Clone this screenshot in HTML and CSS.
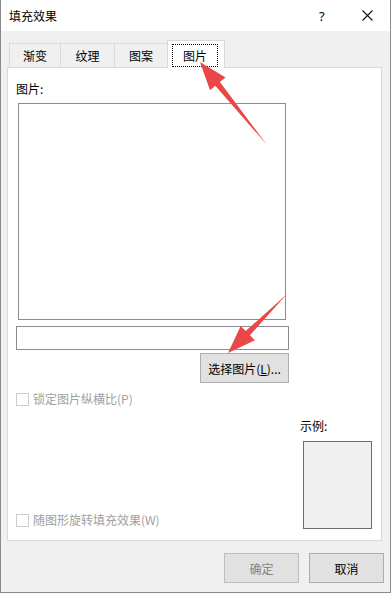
FILE: index.html
```html
<!DOCTYPE html>
<html lang="zh-CN">
<head>
    <meta charset="UTF-8">
    <title>填充效果</title>
    <link rel="stylesheet" href="styles.css">
</head>
<body>

<div class="dialog">
    <div class="titlebar">
        <span class="title">填充效果</span>
        <span class="help">?</span>
        <svg class="close" width="11" height="11" viewBox="0 0 11 11">
            <path d="M0.5 0.5 L10.5 10.5 M10.5 0.5 L0.5 10.5" stroke="#111" stroke-width="1.1" fill="none"/>
        </svg>
    </div>

    <div class="tabs">
        <div class="tab tab-1">渐变</div>
        <div class="tab tab-2">纹理</div>
        <div class="tab tab-3">图案</div>
        <div class="tab active"><span class="focus">图片</span></div>
    </div>

    <div class="panel">
        <div class="label">图片:</div>
        <div class="picture-box"></div>
        <div class="path-input"></div>
        <div class="btn-row">
            <button class="btn select-btn">选择图片(<u>L</u>)...</button>
        </div>
        <div class="check-row">
            <span class="checkbox"></span>
            <span class="check-text">锁定图片纵横比(P)</span>
        </div>
        <div class="lower">
            <div class="check-row rotate-row">
                <span class="checkbox"></span>
                <span class="check-text">随图形旋转填充效果(W)</span>
            </div>
            <div class="sample-col">
                <div class="label">示例:</div>
                <div class="sample-box"></div>
            </div>
        </div>
    </div>

    <div class="footer">
        <button class="btn ok-btn">确定</button>
        <button class="btn">取消</button>
    </div>

    <!-- red annotation arrows -->
    <svg class="arrows" width="391" height="593" viewBox="0 0 391 593">
        <polygon points="267,145 219.9,81.9 225.5,77.4 200,62 210,90.2 215.3,85.7" fill="#e84848"/>
        <polygon points="287,294 249.9,335.3 254.9,340.3 228,353 240.7,326.1 245.7,331.1" fill="#e84848"/>
    </svg>
</div>

</body>
</html>
```

FILE: styles.css
```css
body {
    margin: 0;
    padding: 0;
    background-color: #f0f0f0;
    font-family: "Noto Sans CJK SC", "Noto Sans", sans-serif;
    font-size: 12px;
    color: #000;
}
.dialog {
    position: relative;
    width: 391px;
    height: 593px;
    box-sizing: border-box;
    border: 1px solid #8a8a8a;
    border-top: none;
    background-color: #f0f0f0;
    display: flex;
    flex-direction: column;
}
/* Title bar */
.titlebar {
    height: 31px;
    background-color: #fff;
    display: flex;
    align-items: center;
    padding-left: 8px;
    flex-shrink: 0;
}
.title {
    font-size: 12px;
    line-height: 16px;
    flex: 1;
}
.help {
    font-family: "Noto Sans", sans-serif;
    font-size: 13px;
    width: 12px;
    margin-right: 31px;
}
.close {
    margin-right: 17px;
}
/* Tabs */
.tabs {
    display: flex;
    align-items: flex-end;
    margin-top: 9px;
    padding-left: 8px;
}
.tab {
    height: 24px;
    box-sizing: border-box;
    border: 1px solid #d9d9d9;
    border-bottom: none;
    display: flex;
    align-items: center;
    justify-content: center;
    line-height: 16px;
    margin-left: -1px;
}
.tab-1 {
    width: 52px;
    margin-left: 0;
}
.tab-2 {
    width: 55px;
}
.tab-3 {
    width: 54px;
}
.tab.active {
    position: relative;
    z-index: 1;
    width: 58px;
    height: 28px;
    margin-bottom: -1px;
    background-color: #fff;
    justify-content: flex-start;
    padding-left: 4px;
}
.focus {
    border: 1px dotted #000;
    padding: 0 10px;
    line-height: 21px;
    margin-top: 1px;
}
/* Panel */
.panel {
    margin-left: 6px;
    width: 375px;
    height: 474px;
    box-sizing: border-box;
    border: 1px solid #d9d9d9;
    background-color: #fff;
    padding-left: 8px;
    display: flex;
    flex-direction: column;
    flex-shrink: 0;
}
.label {
    line-height: 16px;
}
.panel > .label {
    margin-top: 13px;
}
.picture-box {
    width: 268px;
    height: 217px;
    box-sizing: border-box;
    border: 1px solid #8b8b93;
    margin-top: 6px;
    margin-left: 2px;
}
.path-input {
    width: 273px;
    height: 24px;
    box-sizing: border-box;
    border: 1px solid #8b8b93;
    margin-top: 6px;
}
.btn-row {
    margin-top: 3px;
    padding-left: 184px;
}
.btn {
    font-family: "Noto Sans CJK SC", "Noto Sans", sans-serif;
    font-size: 12px;
    color: #000;
    background-color: #e1e1e1;
    border: 1px solid #adadad;
    padding: 0;
    margin: 0;
    height: 30px;
    box-sizing: border-box;
}
.select-btn {
    width: 89px;
}
.check-row {
    display: flex;
    align-items: center;
    line-height: 16px;
    color: #a0a0a0;
}
.panel > .check-row {
    margin-top: 8px;
}
.checkbox {
    width: 13px;
    height: 13px;
    box-sizing: border-box;
    border: 1px solid #cccccc;
    background-color: #fff;
    margin-right: 4px;
}
/* Lower area */
.lower {
    display: flex;
    justify-content: space-between;
    align-items: flex-end;
    margin-top: 11px;
}
.rotate-row {
    margin-bottom: 1px;
}
.sample-col {
    width: 72px;
    margin-right: 9px;
}
.sample-box {
    width: 69px;
    height: 88px;
    box-sizing: border-box;
    border: 1px solid #6e6e6e;
    background-color: #f0f0f0;
    margin-top: 7px;
    margin-left: 3px;
}
/* Footer */
.footer {
    display: flex;
    justify-content: flex-end;
    gap: 10px;
    margin-top: 12px;
    padding-right: 6px;
}
.footer .btn {
    width: 75px;
}
.ok-btn {
    color: #838383;
    border-color: #bcbcbc;
}
/* Annotation overlay */
.arrows {
    position: absolute;
    top: 0;
    left: -1px;
    pointer-events: none;
    z-index: 5;
}
```
